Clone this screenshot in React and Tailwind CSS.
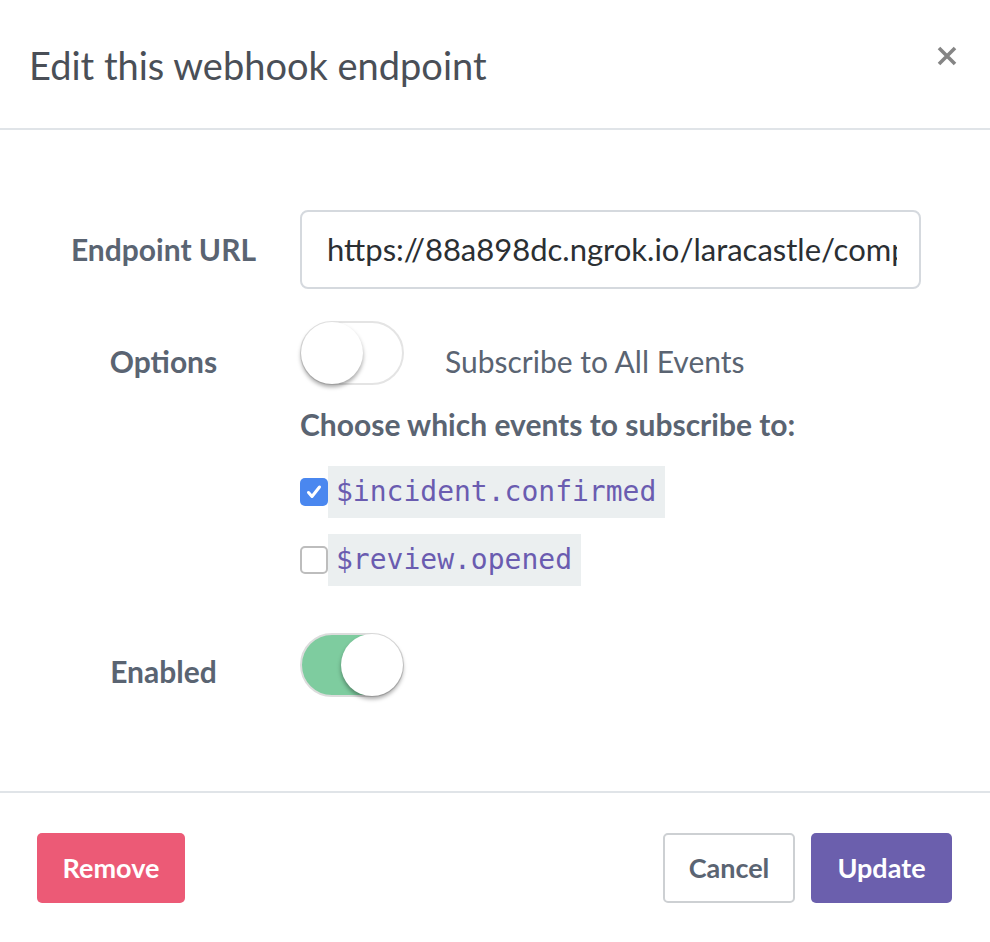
import React from 'react';

function Toggle({ on }) {
  return (
    <div
      className={`relative w-[104px] h-[64px] rounded-full border-2 ${
        on ? 'bg-[#7ecc9f] border-[#dcdcdc]' : 'bg-white border-[#e4e4e4]'
      }`}
    >
      <div
        className={`absolute top-[-1px] w-[62px] h-[62px] rounded-full bg-white shadow-[0_3px_4px_rgba(0,0,0,0.35)] ${
          on ? 'right-[-1px]' : 'left-[-1px]'
        }`}
      />
    </div>
  );
}

function EventOption({ name, checked }) {
  return (
    <div className="flex items-center">
      {checked ? (
        <div className="w-[28px] h-[28px] rounded-[5px] bg-[#4a87ef] flex items-center justify-center">
          <svg width="18" height="18" viewBox="0 0 18 18" fill="none">
            <path d="M3.5 9.5l3.5 4 7.5-9.5" stroke="white" strokeWidth="3" strokeLinecap="round" strokeLinejoin="round" />
          </svg>
        </div>
      ) : (
        <div className="w-[28px] h-[28px] rounded-[5px] bg-white border-2 border-[#bdbdbd]" />
      )}
      <span className="bg-[#ebeff0] text-[#6a5cb0] text-[28px] leading-[52px] pl-[8px] pr-[9px] font-['DejaVu_Sans_Mono',monospace]">
        {name}
      </span>
    </div>
  );
}

export default function App() {
  return (
    <div className="w-[990px] h-[942px] bg-white font-['Lato',sans-serif] text-[#5a6472]">
      {/* header */}
      <div className="h-[130px] border-b-2 border-[#e0e4e8] flex items-start justify-between pl-[29px] pr-[33px]">
        <h1 className="mt-[42px] text-[38px] leading-[46px] text-[#4a4f57]">Edit this webhook endpoint</h1>
        <button className="mt-[46px] text-[#858585]">
          <svg width="20" height="20" viewBox="0 0 20 20">
            <path d="M2 2l16 16M18 2L2 18" stroke="currentColor" strokeWidth="3.6" />
          </svg>
        </button>
      </div>

      {/* body */}
      <div className="pt-[80px] pb-[94px] pl-[37px] pr-[69px]">
        <div className="flex items-center">
          <label className="w-[253px] text-center font-bold text-[30px]">Endpoint URL</label>
          <div className="ml-[10px] flex-1 h-[79px] border-2 border-[#d5d9de] rounded-[8px] flex items-center pl-[25px] pr-[22px] overflow-hidden">
            <span className="text-[31px] text-[#2b2f33] whitespace-nowrap overflow-hidden">
              https://88a898dc.ngrok.io/laracastle/comp
            </span>
          </div>
        </div>

        <div className="flex items-start mt-[32px]">
          <label className="w-[253px] text-center font-bold text-[30px] pt-[22px] leading-[36px]">Options</label>
          <div className="ml-[10px] flex-1">
            <div className="flex items-center">
              <Toggle on={false} />
              <span className="ml-[41px] mt-[16px] text-[30px]">Subscribe to All Events</span>
            </div>
            <div className="mt-[21px] font-bold text-[30px] leading-[36px]">Choose which events to subscribe to:</div>
            <div className="mt-[24px] flex flex-col gap-[16px]">
              <EventOption name="$incident.confirmed" checked />
              <EventOption name="$review.opened" />
            </div>
          </div>
        </div>

        <div className="flex items-start mt-[47px]">
          <label className="w-[253px] text-center font-bold text-[30px] pt-[20px] leading-[36px]">Enabled</label>
          <div className="ml-[10px]">
            <Toggle on />
          </div>
        </div>
      </div>

      {/* footer */}
      <div className="border-t-2 border-[#e0e4e8] flex items-center justify-between pl-[37px] pr-[38px] pt-[40px]">
        <button className="h-[70px] w-[148px] rounded-[5px] bg-[#ec5a76] text-white font-bold text-[27px]">Remove</button>
        <div className="flex gap-[16px]">
          <button className="h-[70px] w-[132px] rounded-[5px] bg-white border-2 border-[#cdd0d3] text-[#5a6472] font-bold text-[27px]">Cancel</button>
          <button className="h-[70px] w-[141px] rounded-[5px] bg-[#6b5fad] text-white font-bold text-[27px]">Update</button>
        </div>
      </div>
    </div>
  );
}
